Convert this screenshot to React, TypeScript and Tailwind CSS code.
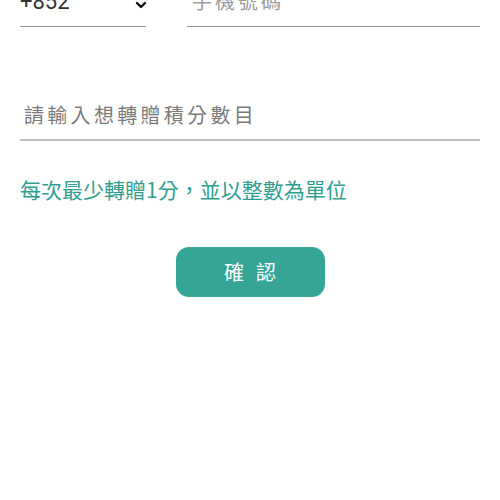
import React from "react";

export default function App() {
  const cjk = { fontFamily: '"Noto Sans CJK TC", "Noto Sans", sans-serif' };
  return (
    <div className="w-[500px] h-[500px] bg-white overflow-hidden px-[20px]" style={cjk}>
      <div className="flex gap-[41px] -mt-[10px]">
        <div className="w-[126px] flex items-start justify-between border-b border-[#9a9a9a] pb-[13px]">
          <span className="text-[22px] leading-[22px] text-[#333] mt-[1px]" style={{ fontFamily: '"Roboto", "Liberation Sans", sans-serif' }}>+852</span>
          <svg width="12" height="8" viewBox="0 0 12 8" className="mt-[11px] mr-[-1px]">
            <polyline points="2,2 6,6 10,2" fill="none" stroke="#111" strokeWidth="2.4" strokeLinecap="round" strokeLinejoin="round" />
          </svg>
        </div>
        <div className="flex-1 border-b border-[#9a9a9a] pb-[14px] pl-[5px]">
          <span className="text-[20px] leading-[22px] tracking-[3px] text-[#9a9a9a] block">手機號碼</span>
        </div>
      </div>

      <div className="mt-[73px] border-b-2 border-[#bdbdbd] pl-[4px] pb-[9px]">
        <span className="text-[20px] leading-[30px] tracking-[3.3px] text-[#7a7a7a]">請輸入想轉贈積分數目</span>
      </div>

      <div className="mt-[33px] text-[21px] leading-[30px] text-[#2f9e90]">每次最少轉贈1分，並以整數為單位</div>

      <div className="flex justify-center mt-[43px]">
        <button className="w-[149px] h-[50px] rounded-[13px] bg-[#35a596] text-white text-[20px] tracking-[12px] pl-[12px] flex items-center justify-center">
          確認
        </button>
      </div>
    </div>
  );
}
